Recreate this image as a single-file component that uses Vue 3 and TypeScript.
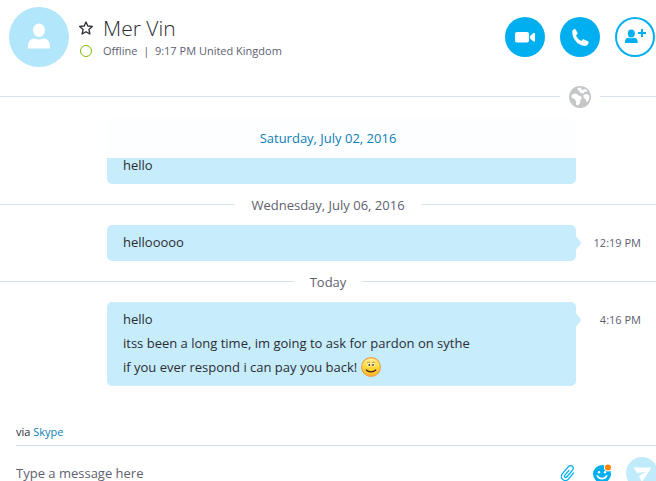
<script setup lang="ts">
import { ref } from 'vue'

interface Message {
  lines: string[]
  time: string
  smile?: boolean
}

interface Day {
  label: string
  message: Message
}

const draft = ref('')

const days: Day[] = [
  { label: 'Wednesday, July 06, 2016', message: { lines: ['hellooooo'], time: '12:19 PM' } },
  {
    label: 'Today',
    message: {
      lines: [
        'hello',
        'itss been a long time, im going to ask for pardon on sythe',
        'if you ever respond i can pay you back!',
      ],
      time: '4:16 PM',
      smile: true,
    },
  },
]
</script>

<template>
  <div class="chat">
    <header class="header">
      <svg class="avatar" viewBox="0 0 60 60" aria-hidden="true">
        <circle cx="30" cy="30" r="30" fill="#b2e6fb" />
        <ellipse cx="30" cy="23.300" rx="6" ry="6.700" fill="#fff" />
        <path d="M19 41.500v-2.500c0-5 3.500-7.500 6-7.500 1.500 0 2.500 1 5 1s3.500-1 5-1c2.500 0 6 2.500 6 7.500v2.500z" fill="#fff" />
      </svg>
      <div class="contact">
        <div class="row name-row">
          <button class="plain star" aria-label="Add to favourites">
            <svg viewBox="0 0 14 14">
              <path d="M7 1l1.800 4 4.500.4-3.400 3 1 4.600L7 10.700 3.100 13l1-4.600-3.400-3 4.500-.4z" fill="none" stroke="#2b2c33" stroke-width="1.300" stroke-linejoin="round" />
            </svg>
          </button>
          <h1>Mer Vin</h1>
        </div>
        <div class="row status-row">
          <span class="presence"></span>
          <span>Offline&nbsp; |&nbsp; 9:17 PM United Kingdom</span>
        </div>
      </div>
      <div class="calls">
        <button class="round" aria-label="Video call">
          <svg viewBox="0 0 40 40">
            <rect x="10" y="15" width="14" height="10.500" rx="2" fill="#fff" />
            <path d="M25 19l3.500-3h1.500v8.500h-1.500L25 21.500z" fill="#fff" />
          </svg>
        </button>
        <button class="round" aria-label="Voice call">
          <svg viewBox="0 0 40 40">
            <path d="M12.300 14.500c.3-1.500 1.300-2.400 2.400-2.600.7-.1 1 .3 1.300 1l1.400 3c.3.700.1 1.200-.4 1.700l-1 .9c1 2.600 2.800 4.400 5.400 5.400l1-1.100c.5-.5 1-.6 1.600-.3l3.300 1.500c.7.300 1.300.8 1.300 1.500 0 1.900-1.800 3.400-4 3.400-6.400 0-12.900-7.500-12.300-14.400z" fill="#fff" />
          </svg>
        </button>
        <button class="round outline" aria-label="Add people">
          <svg viewBox="0 0 40 40">
            <g fill="#00aff0">
              <ellipse cx="16.300" cy="16.500" rx="3.500" ry="4" />
              <path d="M10 26v-1.500c0-2.500 1.600-3.800 3.300-3.800 1 0 1.500.6 3 .6s2-.6 3-.6c1.700 0 3.400 1.300 3.400 3.800V26z" />
              <path d="M26 12h2v3h3v2h-3v3h-2v-3h-3v-2h3z" />
            </g>
          </svg>
        </button>
      </div>
    </header>

    <div class="globe-rule">
      <svg class="globe" viewBox="0 0 22 22" aria-hidden="true">
        <circle cx="11" cy="11" r="11" fill="#c5c6c8" />
        <path d="M8 2.500l2.500-1 2 .7-.5 1.300 2 .2 2-1 2.500 2-1 1-2 .3-1 1.500-3-.5-1-1.500z" fill="#fff" />
        <path d="M2.500 9l3-1.500 2.500.5 1.500 1.500 2 .5 1.500 2-1.500 2-.5 3-2 2.500-2-1v-3.500l-1.500-2-3-1.500z" fill="#fff" />
        <path d="M14.500 9l2.500-1 3 1 .5 3-1.500 3.500-1.500.5-1-3-2-1z" fill="#fff" />
      </svg>
    </div>

    <main>
      <section>
        <h2 class="current-day">Saturday, July 02, 2016</h2>
        <div class="bubble scrolled"><p>hello</p></div>
      </section>

      <section v-for="day in days" :key="day.label">
        <h2 class="day">{{ day.label }}</h2>
        <div class="message">
          <div class="bubble">
            <p v-for="(line, i) in day.message.lines" :key="i">
              <span>{{ line }}</span>
              <svg v-if="day.message.smile && i === day.message.lines.length - 1" class="smile" viewBox="0 0 20 20" role="img" aria-label="Smile">
                <defs>
                  <linearGradient id="face" x1="0" y1="0" x2="0" y2="1">
                    <stop offset="0" stop-color="#fff3a0" />
                    <stop offset="0.450" stop-color="#ffdc3c" />
                    <stop offset="1" stop-color="#fdb52a" />
                  </linearGradient>
                </defs>
                <circle cx="10" cy="10" r="9.400" fill="url(#face)" stroke="#f0a04a" stroke-width="1.200" />
                <ellipse cx="8" cy="7.800" rx="1.600" ry="2" fill="#fff" />
                <ellipse cx="12.300" cy="7.800" rx="1.600" ry="2" fill="#fff" />
                <circle cx="8.300" cy="8" r="0.900" fill="#3b260b" />
                <circle cx="12" cy="8" r="0.900" fill="#3b260b" />
                <path d="M6 6c.8-.9 2-.9 3-.3M11.200 5.700c1-.6 2.200-.6 3 .3" fill="none" stroke="#9b6711" stroke-width=".7" />
                <path d="M5.300 13c2.300 2.600 7.100 2.600 9.400 0" fill="none" stroke="#3b260b" stroke-width="1.200" stroke-linecap="round" />
              </svg>
            </p>
            <svg class="tail" viewBox="0 0 5 14" aria-hidden="true">
              <path d="M0 0c.5 2 4.800 4.500 4.800 7S.5 12 0 14z" fill="#c7ecfc" />
            </svg>
          </div>
          <time>{{ day.message.time }}</time>
        </div>
      </section>
    </main>

    <footer>
      <p class="via">via <a href="#">Skype</a></p>
      <form class="composer" @submit.prevent>
        <input v-model="draft" type="text" placeholder="Type a message here" aria-label="Message" />
        <button type="button" class="plain clip" aria-label="Attach a file">
          <svg viewBox="0 0 18 20">
            <path transform="translate(9 10.500) rotate(40)" d="M-1.300-3v6.500a1.300 1.300 0 0 0 2.600 0V-5.500a2.700 2.700 0 0 0-5.400 0V4a4 4 0 0 0 8 0V-4" fill="none" stroke="#00aff0" stroke-width="1.300" stroke-linecap="round" />
          </svg>
        </button>
        <button type="button" class="plain emoji" aria-label="Emoticons">
          <svg viewBox="0 0 20 20">
            <circle cx="10" cy="11" r="9" fill="#00aff0" />
            <circle cx="7" cy="9.300" r="1.200" fill="#fff" />
            <circle cx="13" cy="9.300" r="1.200" fill="#fff" />
            <path d="M5.300 12.800c2 3.800 7.400 3.800 9.400 0" fill="none" stroke="#fff" stroke-width="1.600" stroke-linecap="round" />
            <circle cx="16" cy="4.500" r="4" fill="#fff" />
            <circle cx="16" cy="4.500" r="3" fill="#ff8400" />
          </svg>
        </button>
        <button type="submit" class="plain send" aria-label="Send message">
          <svg viewBox="0 0 32 32">
            <circle cx="16" cy="16" r="16" fill="#bfebfb" />
            <path d="M7.500 10.500h18L16 25l-3-6 6.500-4.300-8.500 1.300z" fill="#fff" />
          </svg>
        </button>
      </form>
    </footer>
  </div>
</template>

<style>
body {
  margin: 0;
  background: #fff;
}
</style>

<style scoped>
.chat {
  height: 100vh;
  overflow: hidden;
  font-family: "Open Sans", "Noto Sans", sans-serif;
  font-size: 13px;
  color: #2b2c33;
}

h1,
h2,
p {
  margin: 0;
  font-weight: 400;
}

button {
  padding: 0;
  border: 0;
  flex: none;
  cursor: pointer;
}

svg {
  display: block;
}

.plain {
  background: none;
}

.header {
  display: flex;
  align-items: flex-start;
  padding: 7px 1px 19px 9px;
}

.avatar {
  width: 60px;
  height: 60px;
  flex: none;
}

.contact {
  flex: 1;
  min-width: 0;
  padding: 6px 0 0 10px;
}

.row {
  display: flex;
  align-items: center;
  gap: 10px;
  white-space: nowrap;
}

.name-row {
  height: 30px;
}

.star,
.star svg {
  width: 14px;
  height: 14px;
}

h1 {
  font-size: 21px;
  line-height: 30px;
  font-weight: 300;
}

.status-row {
  height: 16px;
  font-size: 11px;
  line-height: 16px;
  color: #606170;
}

.presence {
  box-sizing: border-box;
  width: 12px;
  height: 12px;
  margin: 0 1px;
  border: 1px solid #7fba00;
  border-radius: 50%;
}

.calls {
  display: flex;
  gap: 15px;
  padding-top: 10px;
}

.round {
  width: 40px;
  height: 40px;
  border-radius: 50%;
  background: #00aff0;
}

.outline {
  background: #fff;
  box-shadow: inset 0 0 0 2px #00aff0;
}

.globe-rule,
.day {
  display: flex;
  align-items: center;
}

.globe-rule {
  align-items: flex-start;
  height: 22px;
  gap: 9px;
}

.globe-rule::before,
.globe-rule::after,
.day::before,
.day::after {
  content: "";
  height: 1px;
  flex: 1;
  background: #d3e4ed;
}

.globe-rule::before,
.globe-rule::after {
  margin-top: 10px;
}

.globe-rule::after {
  flex: 0 0 56px;
}

.globe {
  width: 22px;
  height: 22px;
}

main {
  padding-top: 9px;
}

.current-day {
  position: relative;
  z-index: 1;
  height: 41px;
  font-size: 13px;
  line-height: 43px;
  text-align: center;
  color: #0d7fb8;
  background: rgba(255, 255, 255, 0.95);
}

.day {
  height: 41px;
  gap: 16px;
  font-size: 13px;
  color: #606170;
}

.message {
  display: flex;
}

.bubble {
  position: relative;
  flex: 1;
  margin-left: 107px;
  padding: 5px 16px 7px;
  border-radius: 5px;
  background: #c7ecfc;
}

.scrolled {
  margin: -41px 80px 0 107px;
  padding-top: 36px;
}

.bubble p {
  display: flex;
  align-items: center;
  gap: 4px;
  height: 24px;
  line-height: 24px;
}

.smile {
  width: 20px;
  height: 20px;
}

.tail {
  position: absolute;
  top: 11px;
  left: 100%;
  width: 5px;
  height: 14px;
}

time {
  width: 65px;
  padding-right: 15px;
  font-size: 11px;
  line-height: 36px;
  text-align: right;
  color: #606170;
}

footer {
  padding: 37px 0 0 16px;
}

.via {
  padding-bottom: 4px;
  font-size: 11px;
  line-height: 18px;
}

.via a {
  color: #0d7fb8;
  text-decoration: none;
}

.composer {
  display: flex;
  align-items: center;
  height: 54px;
  margin-right: -2px;
  border-top: 1px solid #d3e0ea;
}

input {
  flex: 1;
  min-width: 0;
  padding: 0;
  border: 0;
  outline: 0;
  font: inherit;
  color: inherit;
}

input::placeholder {
  color: #606170;
  opacity: 1;
}

.clip {
  margin-right: 15px;
}

.clip svg {
  width: 18px;
  height: 20px;
}

.emoji {
  margin-right: 14px;
}

.emoji svg {
  width: 20px;
  height: 20px;
}

.send svg {
  width: 32px;
  height: 32px;
}
</style>
